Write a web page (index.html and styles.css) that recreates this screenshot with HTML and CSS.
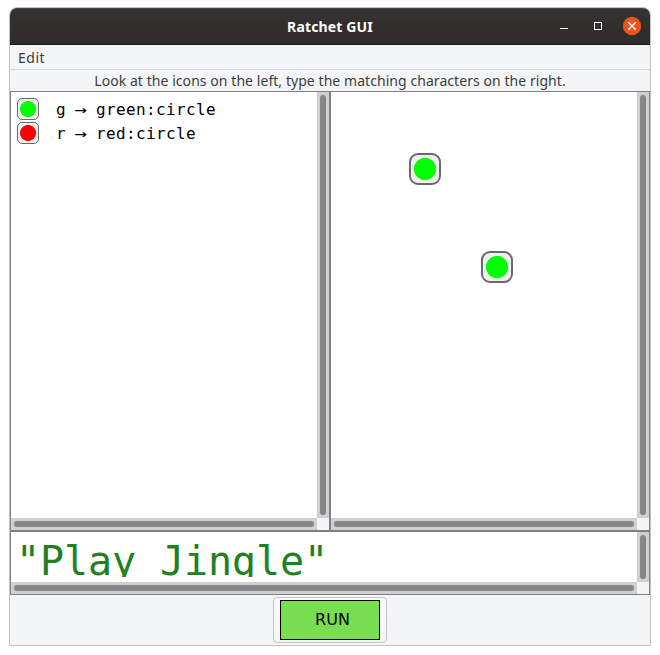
FILE: index.html
```html
<!DOCTYPE html>
<html lang="en">
<head>
<meta charset="utf-8">
<title>Ratchet GUI</title>
<link rel="stylesheet" href="styles.css">
</head>
<body>
<main class="window">
  <header class="titlebar">
    <h1 class="title">Ratchet GUI</h1>
    <div class="controls">
      <svg width="90" height="20" viewBox="0 0 90 20">
        <path d="M6 12h8v1H6z" fill="#fff"/>
        <rect x="40.500" y="6.500" width="7" height="7" fill="none" stroke="#fff"/>
        <circle cx="78" cy="10" r="9.200" fill="#e95420"/>
        <path d="M74.300 6.300l7.400 7.400M81.700 6.300l-7.400 7.400" stroke="#fff" stroke-width="1.400"/>
      </svg>
    </div>
  </header>
  <nav class="menubar"><span class="menu">Edit</span></nav>
  <p class="hint"><span class="hint-text">Look at the icons on the left, type the matching characters on the right.</span></p>
  <div class="panes">
    <section class="pane">
      <ul class="legend">
        <li><i class="key green"></i><span>g <b class="arrow">→</b> green:circle</span></li>
        <li><i class="key red"></i><span>r <b class="arrow">→</b> red:circle</span></li>
      </ul>
      <div class="bar vertical"><i></i></div>
      <div class="bar horizontal"><i></i></div>
    </section>
    <section class="pane">
      <div class="canvas">
        <i class="node first"></i>
        <i class="node second"></i>
      </div>
      <div class="bar vertical"><i></i></div>
      <div class="bar horizontal"><i></i></div>
    </section>
  </div>
  <section class="pane output">
    <div class="code"><div class="code-text">"Play Jingle"</div></div>
    <div class="bar vertical"><i></i></div>
    <div class="bar horizontal"><i></i></div>
  </section>
  <footer class="footer">
    <button class="run"><span>RUN</span></button>
  </footer>
</main>
</body>
</html>
```
FILE: styles.css
```css
* { box-sizing: border-box; }
body {
  margin: 0;
  padding: 7px 9px;
  background: #fff;
  color: #3d3d3d;
  font-family: "Noto Sans", sans-serif;
  font-size: 14px;
}
.window {
  width: 642px;
  height: 639px;
  display: flex;
  flex-direction: column;
  border: 1px solid #c2c2c2;
  border-radius: 8px 8px 0 0;
  background: #f4f5f7;
  overflow: hidden;
}
.titlebar {
  height: 37px;
  flex: none;
  display: grid;
  grid-template-columns: 96px 1fr 96px;
  align-items: center;
  border-top: 1px solid #464543;
  border-bottom: 1px solid #1d1b1b;
  background: linear-gradient(#353432, #2d2b2b);
}
.title {
  grid-column: 2;
  margin: 0;
  text-align: center;
  color: #fff;
  font-size: 14px;
  line-height: 20px;
  font-weight: 700;
  letter-spacing: 0.150px;
}
.controls { height: 22px; }
.controls svg { display: block; }
.menubar {
  height: 25px;
  flex: none;
  padding-left: 8px;
  line-height: 25px;
  letter-spacing: 0.500px;
  border-bottom: 1px solid #d8d9dc;
}
.hint {
  height: 21px;
  flex: none;
  margin: 0;
  line-height: 21px;
  text-align: center;
  white-space: nowrap;
  letter-spacing: 0.060px;
}
.panes { display: flex; height: 440px; flex: none; }
.pane {
  width: 320px;
  display: grid;
  grid-template-columns: 1fr 12px;
  grid-template-rows: 1fr 12px;
  border: 1px solid #808080;
}
.legend, .canvas, .code { background: #fff; min-width: 0; min-height: 0; }
.legend {
  list-style: none;
  margin: 0;
  padding: 5px 6px;
  color: #000;
  font: 16px "DejaVu Sans Mono", monospace;
  letter-spacing: 0.370px;
}
.legend li { display: flex; align-items: center; height: 24px; gap: 17px; }
.arrow { display: inline-block; font-weight: 400; transform: scaleX(1.3); }
.key {
  width: 22px;
  height: 22px;
  border: 1px solid #686868;
  border-radius: 5px;
}
.green { background: radial-gradient(circle, #0f0 7.600px, #f0f0f0 8.300px); }
.red { background: radial-gradient(circle, #f00 7.600px, #f0f0f0 8.300px); }
.canvas { position: relative; }
.node {
  position: absolute;
  width: 32px;
  height: 32px;
  border: 2px solid #6a6a6a;
  border-radius: 9px;
  background: radial-gradient(circle, #0f0 10.700px, #f0f0f0 11.400px);
}
.first { left: 78px; top: 61px; }
.second { left: 150px; top: 159px; }
.bar { display: flex; padding: 3px; background: #cfd0d2; }
.bar i { flex: 1; border-radius: 3px; background: #868685; }
.output { width: 640px; height: 64px; flex: none; }
.code { padding: 5px; }
.code-text {
  height: 40px;
  overflow: hidden;
  color: #228022;
  font: 40px/48px "DejaVu Sans Mono", monospace;
  letter-spacing: -0.080px;
  white-space: pre;
}
.footer { flex: 1; display: flex; justify-content: center; align-items: flex-start; padding-top: 2px; }
.run {
  width: 114px;
  height: 46px;
  margin: 0;
  padding: 2px 6px;
  display: flex;
  border: 1px solid #c1c4cb;
  border-radius: 4px;
  background: linear-gradient(#fbfbfc, #f4f5f7);
}
.run span {
  width: 100px;
  height: 40px;
  padding-left: 5px;
  border: 1px solid #000;
  background: #78dd51;
  color: #000;
  font: 16px/37px "DejaVu Sans", sans-serif;
  text-align: center;
}
```
